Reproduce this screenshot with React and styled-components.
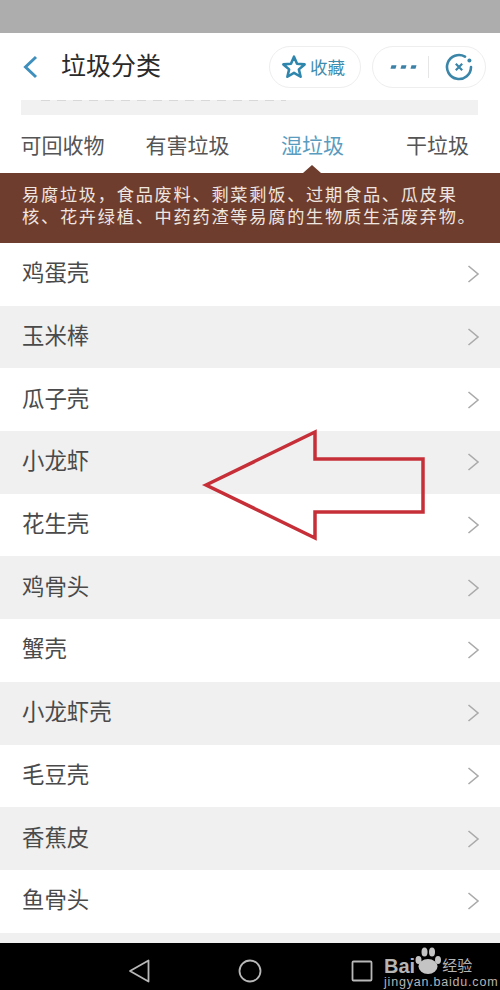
import React from "react";
import styled, { createGlobalStyle } from "styled-components";

const GlobalStyle = createGlobalStyle`
  html, body {
    margin: 0;
    padding: 0;
    background: #fff;
  }
  body {
    font-family: "Liberation Sans", "Noto Sans CJK SC", sans-serif;
  }
`;

const Page = styled.div`
  position: relative;
  width: 500px;
  height: 990px;
  overflow: hidden;
  display: flex;
  flex-direction: column;
  background: #fff;
`;

const StatusBar = styled.div`
  height: 33px;
  background: #adadad;
`;

const NavBar = styled.header`
  height: 67px;
  display: flex;
  align-items: center;
  padding: 1px 14px 0 22px;
  box-sizing: border-box;
`;

const BackButton = styled.svg`
  width: 17px;
  height: 24px;
  margin-right: 22px;
  margin-top: -1px;
`;

const Title = styled.h1`
  flex: 1;
  margin: 0 0 2px;
  font-size: 25px;
  line-height: 34px;
  font-weight: 400;
  color: #2a2a2a;
`;

const Pill = styled.div`
  height: 42px;
  margin-top: -1px;
  box-sizing: border-box;
  border: 1px solid #eeeeee;
  border-radius: 21px;
  display: flex;
  align-items: center;
  background: #fff;
`;

const FavPill = styled(Pill)`
  width: 92px;
  margin-right: 11px;
  padding-left: 11px;
  gap: 3px;
  color: #3f8cae;
  font-size: 17.5px;
`;

const MorePill = styled(Pill)`
  width: 114px;
  padding-left: 17px;
`;

const Divider = styled.span`
  width: 1px;
  height: 22px;
  background: #e6e6e6;
  margin: 0 16px 0 10px;
`;

const SearchStub = styled.div`
  height: 15px;
  margin: 0 22px 0 21px;
  background: #f1f1f1;
`;

// the search box text is scrolled away, only its lowest pixels still show
const SearchRemnant = styled.div`
  width: 245px;
  height: 1px;
  margin-left: 20px;
  background: repeating-linear-gradient(90deg, #d8d8d8 0 9px, #f1f1f1 9px 16px);
`;

const Tabs = styled.nav`
  height: 58px;
  display: grid;
  grid-template-columns: repeat(4, 125px);
  align-items: center;
  padding-top: 4px;
  box-sizing: border-box;
`;

const Tab = styled.span`
  font-size: 21px;
  line-height: 30px;
  text-align: center;
  color: ${(p) => (p.$active ? "#5a9cc0" : "#555555")};
`;

const Description = styled.div`
  position: relative;
  height: 70px;
  box-sizing: border-box;
  padding: 11px 0 0 22px;
  background: #6e3d2d;
  color: #f0e6e0;
  font-size: 17.2px;
  line-height: 22px;
  white-space: nowrap;
  letter-spacing: 1.75px;
`;

const Notch = styled.span`
  position: absolute;
  top: -8px;
  left: 303px;
  width: 0;
  height: 0;
  border-left: 9px solid transparent;
  border-right: 9px solid transparent;
  border-bottom: 8px solid #6e3d2d;
`;

const List = styled.ul`
  flex: 1;
  margin: 0;
  padding: 0;
  list-style: none;
  overflow: hidden;
`;

const Row = styled.li`
  height: 62.7px;
  box-sizing: border-box;
  display: flex;
  align-items: center;
  justify-content: space-between;
  padding: 0 20px 0 22px;
  background: ${(p) => (p.$shaded ? "#f0f0f0" : "#ffffff")};
  color: #4a4a4a;
  font-size: 22.4px;
`;

const RowLabel = styled.span`
  margin-bottom: 6px;
`;

const Chevron = styled.svg`
  width: 13px;
  height: 20px;
  flex: none;
`;

const BottomBar = styled.footer`
  height: 47px;
  background: #000;
  display: flex;
  align-items: center;
  padding: 9px 0 0 128px;
  box-sizing: border-box;
`;

const SystemIcon = styled.svg`
  width: 24px;
  height: 24px;
  margin-right: ${(p) => p.$gap}px;
  flex: none;
`;

const Arrow = styled.svg`
  position: absolute;
  left: 200px;
  top: 425px;
  width: 230px;
  height: 120px;
`;

const Watermark = styled.div`
  position: absolute;
  left: 384px;
  top: 947px;
  width: 112px;
  color: #b5b5b5;
`;

const BrandLine = styled.div`
  display: flex;
  align-items: flex-end;
  height: 29px;
  font-size: 20px;
  font-weight: 700;
  line-height: 20px;
`;

const Paw = styled.svg`
  width: 28px;
  height: 27px;
  margin: 0 0 2px -1px;
  flex: none;
`;

const BrandSuffix = styled.span`
  font-size: 15px;
  font-weight: 400;
`;

const Domain = styled.div`
  font-size: 12.5px;
  line-height: 12px;
  letter-spacing: 0.8px;
  white-space: nowrap;
`;

const tabs = ["可回收物", "有害垃圾", "湿垃圾", "干垃圾"];

const items = [
  "鸡蛋壳",
  "玉米棒",
  "瓜子壳",
  "小龙虾",
  "花生壳",
  "鸡骨头",
  "蟹壳",
  "小龙虾壳",
  "毛豆壳",
  "香蕉皮",
  "鱼骨头",
];

const App = () => {
  return (
    <Page>
      <GlobalStyle />
      <StatusBar />
      <NavBar>
        <BackButton viewBox="0 0 17 24">
          <path d="M14 2 L3.5 12 L14 22" fill="none" stroke="#3f8fbd" strokeWidth="3" />
        </BackButton>
        <Title>垃圾分类</Title>
        <FavPill>
          <svg width="26" height="26" viewBox="0 0 24 24">
            <path
              d="M12 2.5 L14.8 9 L21.8 9.6 L16.5 14.2 L18.1 21 L12 17.4 L5.9 21 L7.5 14.2 L2.2 9.6 L9.2 9 Z"
              fill="none"
              stroke="#2f86ad"
              strokeWidth="2.4"
              strokeLinejoin="round"
            />
          </svg>
          <span>收藏</span>
        </FavPill>
        <MorePill>
          <svg width="28" height="8" viewBox="0 0 28 8">
            <g fill="#3b80a6">
              <path d="M1.5 2.2 H6.5 L5.5 5.8 H0.5 Z" />
              <path d="M11.5 2.2 H16.5 L15.5 5.8 H10.5 Z" />
              <path d="M21.5 2.2 H26.5 L25.5 5.8 H20.5 Z" />
            </g>
          </svg>
          <Divider />
          <svg width="28" height="28" viewBox="0 0 28 28">
            <path
              d="M20 3.6 A12 12 0 1 0 26 14"
              fill="none"
              stroke="#3a85a8"
              strokeWidth="2.6"
              strokeLinecap="round"
            />
            <circle cx="24.4" cy="7.4" r="2" fill="#3a85a8" />
            <path d="M10.8 10.8 L17.2 17.2 M17.2 10.8 L10.8 17.2" stroke="#3a85a8" strokeWidth="2.2" />
          </svg>
        </MorePill>
      </NavBar>
      <SearchStub>
        <SearchRemnant />
      </SearchStub>
      <Tabs>
        {tabs.map((t) => (
          <Tab key={t} $active={t === "湿垃圾"}>
            {t}
          </Tab>
        ))}
      </Tabs>
      <Description>
        <Notch />
        易腐垃圾，食品废料、剩菜剩饭、过期食品、瓜皮果
        <br />
        核、花卉绿植、中药药渣等易腐的生物质生活废弃物。
      </Description>
      <List>
        {items.map((item, i) => (
          <Row key={item} $shaded={i % 2 === 1}>
            <RowLabel>{item}</RowLabel>
            <Chevron viewBox="0 0 13 20">
              <path d="M1.5 2 L11 10 L1.5 18" fill="none" stroke="#aaaaaa" strokeWidth="1.6" />
            </Chevron>
          </Row>
        ))}
        <Row $shaded />
      </List>
      <BottomBar>
        <SystemIcon $gap={86} viewBox="0 0 24 24">
          <path d="M20.5 1.5 V22.5 L2 12 Z" fill="none" stroke="#b8b8b8" strokeWidth="1.8" strokeLinejoin="round" />
        </SystemIcon>
        <SystemIcon $gap={88} viewBox="0 0 24 24">
          <circle cx="12" cy="12" r="10.5" fill="none" stroke="#b8b8b8" strokeWidth="1.8" />
        </SystemIcon>
        <SystemIcon $gap={0} viewBox="0 0 24 24">
          <rect x="2.5" y="2.5" width="19" height="19" rx="1" fill="none" stroke="#b8b8b8" strokeWidth="1.8" />
        </SystemIcon>
      </BottomBar>
      <Arrow viewBox="0 0 230 120">
        <path
          d="M6 60 L115 7 L115 34 L223 34 L223 87 L115 87 L115 113 Z"
          fill="none"
          stroke="#c62f38"
          strokeWidth="3.5"
          strokeLinejoin="miter"
        />
      </Arrow>
      <Watermark>
        <BrandLine>
          <span>Bai</span>
          <Paw viewBox="0 0 28 27">
            <g fill="#c4c4c4">
              <ellipse cx="4.5" cy="13" rx="3" ry="4" />
              <ellipse cx="10.5" cy="5" rx="3" ry="4.5" />
              <ellipse cx="18" cy="5" rx="3" ry="4.5" />
              <ellipse cx="24" cy="13" rx="3" ry="4" />
              <ellipse cx="14" cy="19.5" rx="9.5" ry="7.5" />
            </g>
          </Paw>
          <BrandSuffix>经验</BrandSuffix>
        </BrandLine>
        <Domain>jingyan.baidu.com</Domain>
      </Watermark>
    </Page>
  );
};

export default App;
